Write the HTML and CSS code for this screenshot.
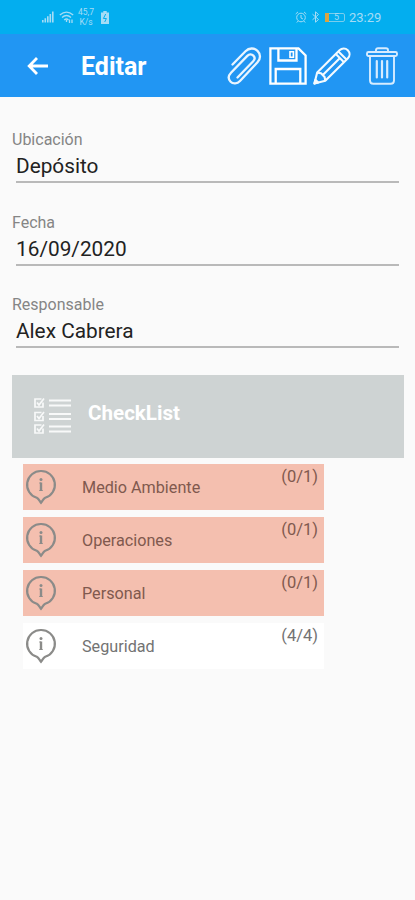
FILE: index.html
```
<!DOCTYPE html>
<html lang="es">
<head>
<meta charset="UTF-8">
<meta name="viewport" content="width=device-width, initial-scale=1.0">
<title>Editar</title>
<link rel="stylesheet" href="styles.css">
</head>
<body>

<!-- shared icons -->
<svg class="defs" width="0" height="0">
    <symbol id="info" viewBox="0 0 32 36">
        <path d="M16 2A13.7 13.7 0 0 0 11.8 28.8C13.8 29.8 14.5 32 16 33.8C17.5 32 18.2 29.8 20.2 28.8A13.7 13.7 0 0 0 16 2Z" fill="none" stroke="#8b8b89" stroke-width="2.2"/>
        <circle cx="16" cy="10.5" r="1.5" fill="#8b8b89"/>
        <path d="M14.3 14H16M14.3 21.5H17.7" stroke="#8b8b89" stroke-width="1"/>
        <path d="M16 13.5V22" stroke="#8b8b89" stroke-width="2.4"/>
    </symbol>
</svg>

<div class="status-bar">
    <div class="status-left">
        <svg width="12" height="12" viewBox="0 0 12 12" fill="currentColor"><path d="M0 9h1.6v2.5H0zM2.5 7.3h1.6v4.2H2.5zM5 5.2h1.6v6.3H5zM7.5 3h1.6v8.5H7.5zM10 .5h1.6v11H10z"/></svg>
        <svg width="15" height="13" viewBox="0 0 15 13" fill="none" stroke="currentColor" stroke-width="1.3"><path d="M.8 4Q7.5-1.8 14.2 4M3 6.5Q7.5 2.5 12 6.5M5.2 9Q7.5 7 9.5 9"/><path d="M7.5 9v2M10.5 8.5v3.5M13 12V8.5"/></svg>
        <div class="net-speed"><span>45,7</span><span>K/s</span></div>
        <svg class="battery-small" width="8" height="13" viewBox="0 0 8 13"><path d="M2.3 0h3.4v1.5H8V13H0V1.5h2.3z" fill="currentColor"/><path d="M4.7 3L2.4 7.5h3L3.7 11" fill="none" stroke="#03aeef" stroke-width="1"/></svg>
    </div>
    <div class="status-right">
        <svg width="12" height="12" viewBox="0 0 12 12" fill="none" stroke="currentColor"><circle cx="6" cy="6.5" r="4.3"/><path d="M6 4v3l2 1M.7 3L3 .9M11.3 3L9 .9M2.8 10.2l-1 1.3M9.2 10.2l1 1.3"/></svg>
        <svg width="9" height="12" viewBox="0 0 9 12" fill="none" stroke="currentColor"><path d="M1.5 3.2l6 5.3-3 2.7V.8l3 2.7-6 5.3"/></svg>
        <div class="battery"><i></i><span>5</span></div>
        <span class="clock">23:29</span>
    </div>
</div>

<div class="toolbar">
    <svg class="back" width="22" height="20" viewBox="0 0 22 20" fill="none" stroke="#fff" stroke-width="2.8"><path d="M21 10H2.5M10 2L2.2 10l7.8 8"/></svg>
    <h1>Editar</h1>
    <div class="actions">
        <svg width="36" height="40" viewBox="0 0 36 40" fill="none" stroke="#e9f5ff" stroke-width="2.3" stroke-linecap="round" stroke-linejoin="round"><path d="M5.5 18.5L18.5 5.2C22 1.7 27.2 1.6 30.5 4.8C33.8 8 33.8 12.8 30.5 16.3L13 35C10.2 38 6 38.2 3.6 35.7C1.2 33.2 1.2 29.7 4 26.7L20.3 9.9C22.2 8 24.8 8 26.4 9.6C28 11.2 28 13.3 26.2 15.2L10.5 31.5"/></svg>
        <svg width="38" height="38" viewBox="0 0 38 38" fill="none" stroke="#fff" stroke-width="2.3"><path d="M1.4 1.4H29.5L36.6 8.5V36.6H1.4Z"/><path d="M9.4 1.4V13.5H27.5V1.4M6.7 36V22H31.3V36"/><path d="M21 4.7h3.4v5.5H21z" stroke-width="1.6"/></svg>
        <svg width="38" height="38" viewBox="0 0 38 38" fill="none" stroke="#f4faff" stroke-width="2.1" stroke-linejoin="round"><path d="M1.4 36.6L4.2 25.6L26.5 3.3C29 .8 32.5 .9 34.8 3.2C37.1 5.5 37.2 9 34.7 11.5L12.3 33.8Z"/><path d="M22.8 7L31 15.2M25.4 4.5L33.5 12.6M4.2 25.6L8 26.2L11.6 30L12.3 33.8M9.8 28.1L26.2 11.7"/><path d="M1.4 36.6L2.4 32.8L5.2 35.6Z" fill="#f4faff"/></svg>
        <svg class="trash" width="32" height="38" viewBox="0 0 32 38" fill="none" stroke="#d6ecff" stroke-width="1.9" stroke-linejoin="round"><rect x="1" y="5" width="30" height="4" rx="1.5"/><path d="M10 5V3Q10 1.2 12 1.2H20Q22 1.2 22 3V5M4 9V33.5Q4 36.8 7.3 36.8H24.7Q28 36.8 28 33.5V9"/><path d="M10.8 14V30.5M16 14V30.5M21.2 14V30.5" stroke-width="2.2" stroke-linecap="round"/></svg>
    </div>
</div>

<div class="form">
    <div class="field">
        <label>Ubicación</label>
        <div class="value">Depósito</div>
    </div>
    <div class="field">
        <label>Fecha</label>
        <div class="value">16/09/2020</div>
    </div>
    <div class="field">
        <label>Responsable</label>
        <div class="value">Alex Cabrera</div>
    </div>
</div>

<div class="checklist-header">
    <svg width="38" height="38" viewBox="0 0 38 38" fill="none" stroke="#f8f9f9" stroke-width="1.7">
        <path d="M9 5.5V10H1V2H7.5M9 19V23.5H1V15.5H7.5M9 31.5V36H1V28H7.5"/>
        <path d="M3 5.5L5 8L10 1.5M3 19L5 21.5L10 15M3 31.5L5 34L10 27.5"/>
        <path d="M15 3.5H37M15 8.5H37M15 17H37M15 22H37M15 29.5H37M15 34.5H37" stroke-width="2"/>
    </svg>
    <h2>CheckList</h2>
</div>

<div class="checklist">
    <div class="item pending">
        <svg width="32" height="36"><use href="#info"/></svg>
        <span class="name">Medio Ambiente</span>
        <span class="count">(0/1)</span>
    </div>
    <div class="item pending">
        <svg width="32" height="36"><use href="#info"/></svg>
        <span class="name">Operaciones</span>
        <span class="count">(0/1)</span>
    </div>
    <div class="item pending">
        <svg width="32" height="36"><use href="#info"/></svg>
        <span class="name">Personal</span>
        <span class="count">(0/1)</span>
    </div>
    <div class="item">
        <svg width="32" height="36"><use href="#info"/></svg>
        <span class="name">Seguridad</span>
        <span class="count">(4/4)</span>
    </div>
</div>

</body>
</html>
```
FILE: styles.css
```
* {
    box-sizing: border-box;
}
body {
    font-family: Roboto, "Liberation Sans", sans-serif;
    background-color: #fafafa;
    margin: 0;
    min-height: 100vh;
}
svg {
    display: block;
    flex: none;
}
.defs {
    position: absolute;
}

/* Status bar */
.status-bar {
    display: flex;
    justify-content: space-between;
    height: 34px;
    padding: 0 33px 0 42px;
    background-color: #03aeef;
    color: #a5dcf5;
}
.status-left,
.status-right {
    display: flex;
    align-items: center;
    height: 34px;
}
.status-left svg:nth-child(2) {
    margin-left: 5px;
}
.net-speed {
    display: flex;
    flex-direction: column;
    align-items: center;
    width: 18px;
    margin-left: 3px;
    font-size: 8.5px;
    line-height: 10px;
}
.battery-small {
    margin-left: 6px;
}
.status-right svg:nth-child(2) {
    margin-left: 4px;
}
.battery {
    display: flex;
    align-items: center;
    width: 20px;
    height: 9px;
    margin-left: 5px;
    border: 1px solid #79cdec;
    border-radius: 2px;
    font-size: 9px;
}
.battery i {
    width: 4px;
    height: 9px;
    margin-left: -1px;
    background-color: #d9a441;
}
.battery span {
    flex: 1;
    text-align: center;
}
.clock {
    width: 33px;
    margin-left: 4px;
    font-size: 13px;
}

/* Toolbar */
.toolbar {
    display: flex;
    align-items: center;
    height: 63px;
    padding: 0 17px 0 27px;
    background-color: #2196f3;
    color: #fff;
}
.toolbar h1 {
    margin: 2px 0 0 32px;
    font-size: 25px;
    font-weight: 700;
}
.actions {
    display: flex;
    align-items: center;
    gap: 6px;
    margin-left: auto;
}
.trash {
    margin-left: 9px;
}

/* Form */
.form {
    padding: 33px 12px 0;
}
.field {
    height: 82.5px;
}
.field label {
    display: block;
    font-size: 16px;
    line-height: 20px;
    color: #858585;
}
.value {
    height: 33px;
    margin: 0 4px;
    border-bottom: 2px solid #b9b9b9;
    font-size: 20.8px;
    line-height: 33px;
    color: #222;
}

/* Checklist */
.checklist-header {
    display: flex;
    align-items: center;
    width: 392px;
    height: 83px;
    margin: -3px 0 0 12px;
    padding-left: 22px;
    background-color: #ced3d3;
    color: #fff;
}
.checklist-header h2 {
    margin: -6px 0 0 16px;
    font-size: 20.6px;
    font-weight: 700;
}
.checklist {
    display: flex;
    flex-direction: column;
    gap: 7px;
    width: 301px;
    margin: 6px 0 0 23px;
}
.item {
    display: flex;
    align-items: center;
    height: 46px;
    padding: 0 6px 0 2px;
    background-color: #fff;
    color: #737373;
}
.item.pending {
    background-color: #f4bfaf;
    color: #80594e;
}
.item .name {
    flex: 1;
    margin: 2px 0 0 25px;
    font-size: 16.2px;
}
.item .count {
    align-self: flex-start;
    margin-top: 3px;
    font-size: 16.5px;
    line-height: 20px;
}
```
